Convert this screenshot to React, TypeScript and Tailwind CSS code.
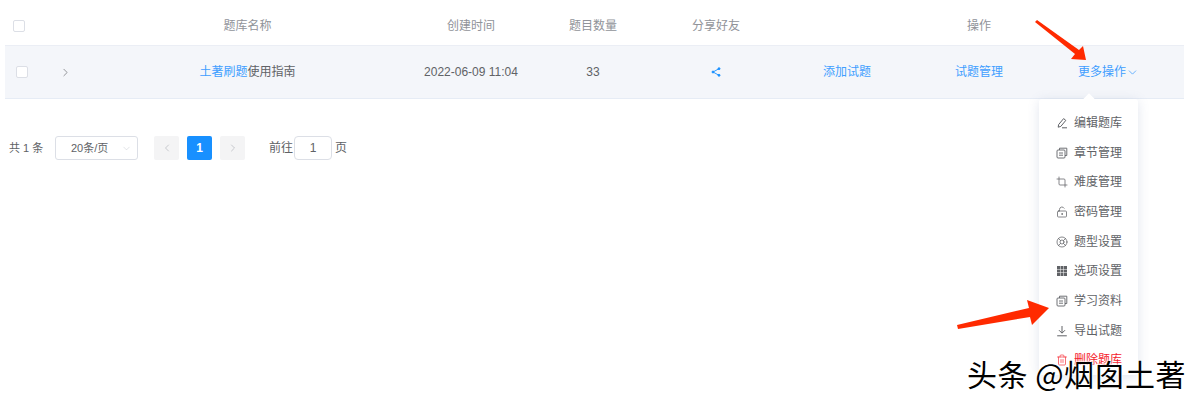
import React from 'react'
import { ChevronRight, ChevronLeft, ChevronDown, Crop, LockKeyholeOpen, LifeBuoy, Trash2 } from 'lucide-react'

const font = "font-['Liberation_Sans','Noto_Sans_CJK_SC',sans-serif]"
const columns = 'grid-cols-[40px_40px_325px_122px_122px_124px_138px_126px_142px]'

function PagesIcon() {
    return (
        <svg width="12" height="12" viewBox="0 0 12 12" fill="none" stroke="currentColor" strokeWidth="0.9">
            <rect x="1" y="3" width="8" height="8" rx="1" />
            <path d="M3.5 3V1.2H10.8V8.5H9" />
            <path d="M3 6H7M3 8.2H7" />
        </svg>
    )
}

function GridIcon() {
    return (
        <svg width="12" height="12" viewBox="0 0 12 12" fill="currentColor">
            {[1, 4.5, 8].map((y) =>
                [1, 4.5, 8].map((x) => <rect key={`${x}-${y}`} x={x} y={y} width="3" height="3" />)
            )}
        </svg>
    )
}

function EditIcon() {
    return (
        <svg width="12" height="12" viewBox="0 0 12 12" fill="none" stroke="currentColor" strokeWidth="1">
            <path d="M2.2 10.2 2.6 7.6 7.6 1.6 9.8 3.4 4.8 9.4Z" />
            <path d="M6 10.8H11" />
        </svg>
    )
}

function ExportIcon() {
    return (
        <svg width="12" height="12" viewBox="0 0 12 12" fill="none" stroke="currentColor" strokeWidth="1">
            <path d="M6 1V8M3 5.2 6 8.2 9 5.2" />
            <path d="M1.2 10.8H10.8" />
        </svg>
    )
}

function ShareIcon() {
    return (
        <svg width="10" height="10" viewBox="0 0 10 10" fill="currentColor" stroke="currentColor" strokeWidth="0.9">
            <path d="M8 1.7 2 5 8 8.3" fill="none" />
            <circle cx="8" cy="1.7" r="1" />
            <circle cx="2" cy="5" r="1" />
            <circle cx="8" cy="8.3" r="1" />
        </svg>
    )
}

const menuItems = [
    { label: '编辑题库', icon: <EditIcon /> },
    { label: '章节管理', icon: <PagesIcon /> },
    { label: '难度管理', icon: <Crop size={12} strokeWidth={1.5} /> },
    { label: '密码管理', icon: <LockKeyholeOpen size={12} strokeWidth={1.5} /> },
    { label: '题型设置', icon: <LifeBuoy size={12} strokeWidth={1.5} /> },
    { label: '选项设置', icon: <GridIcon /> },
    { label: '学习资料', icon: <PagesIcon /> },
    { label: '导出试题', icon: <ExportIcon /> },
]

function Checkbox() {
    return <span className='block w-[12px] h-[12px] bg-white border border-[#dcdfe6] rounded-[2px]'></span>
}

export default function App() {
    return (
        <div className={`relative w-[1200px] h-[401px] overflow-hidden bg-white text-[12px] ${font}`}>
            <div className='ml-[5px] w-[1179px]'>
                {/* header */}
                <div className={`h-[46px] pt-[7px] grid ${columns} items-center text-center text-[#909399] border-b border-[#ebeef5]`}>
                    <div className='pl-[8px]'><Checkbox /></div>
                    <div></div>
                    <div>题库名称</div>
                    <div>创建时间</div>
                    <div>题目数量</div>
                    <div>分享好友</div>
                    <div></div>
                    <div>操作</div>
                    <div></div>
                </div>
                {/* row */}
                <div className={`h-[53px] grid ${columns} items-center text-center text-[#606266] bg-[#f4f6fa] border-b border-[#e6ecf5]`}>
                    <div className='pl-[11px]'><Checkbox /></div>
                    <div className='flex justify-center text-[#606266]'><ChevronRight size={13} strokeWidth={1.2} /></div>
                    <div><span className='text-[#409eff]'>土著刷题</span>使用指南</div>
                    <div className='whitespace-nowrap'>2022-06-09 11:04</div>
                    <div>33</div>
                    <div className='flex justify-center text-[#1890ff]'><ShareIcon /></div>
                    <div className='text-[#409eff]'>添加试题</div>
                    <div className='text-[#409eff]'>试题管理</div>
                    <div className='pr-[9px] flex justify-center items-center text-[#409eff]'>
                        更多操作<ChevronDown size={13} strokeWidth={1.4} />
                    </div>
                </div>
            </div>

            {/* pagination */}
            <div className='mt-[37px] ml-[9px] flex items-center text-[#606266]'>
                <span className='w-[46px] whitespace-nowrap text-[11px]'>共 1 条</span>
                <div className='w-[83px] h-[24px] flex items-center justify-between pl-[15px] pr-[5px] border border-[#dcdfe6] rounded-[3px] text-[11px]'>
                    <span>20条/页</span>
                    <ChevronDown size={11} strokeWidth={1} className='text-[#c0c4cc]' />
                </div>
                <div className='ml-[16px] w-[25px] h-[24px] flex items-center justify-center bg-[#f4f4f5] text-[#a8abb2] rounded-[2px]'>
                    <ChevronLeft size={12} strokeWidth={1.2} />
                </div>
                <div className='ml-[8px] w-[25px] h-[24px] flex items-center justify-center bg-[#1890ff] text-white font-bold rounded-[2px]'>1</div>
                <div className='ml-[8px] w-[25px] h-[24px] flex items-center justify-center bg-[#f4f4f5] text-[#a8abb2] rounded-[2px]'>
                    <ChevronRight size={12} strokeWidth={1.2} />
                </div>
                <span className='ml-[24px]'>前往</span>
                <div className='ml-[1px] w-[38px] h-[24px] flex items-center justify-center border border-[#dcdfe6] rounded-[4px]'>1</div>
                <span className='ml-[3px]'>页</span>
            </div>

            {/* dropdown */}
            <div className='absolute left-[1039px] top-[99px] w-[99px] bg-white rounded-[3px] shadow-[0_2px_12px_rgba(90,110,160,0.18)] pt-[9px] text-[#606266]'>
                <div className='absolute left-[46px] top-[-4px] w-[8px] h-[8px] rotate-45 bg-white'></div>
                {menuItems.map((item) => (
                    <div key={item.label} className='h-[29.7px] flex items-center gap-[6px] pl-[17px] whitespace-nowrap'>
                        <span className='text-[#606266]'>{item.icon}</span>
                        <span>{item.label}</span>
                    </div>
                ))}
                <div className='h-[29.7px] flex items-center gap-[6px] pl-[17px] whitespace-nowrap text-[#f5222d]'>
                    <Trash2 size={12} strokeWidth={1.3} />
                    <span>删除题库</span>
                </div>
            </div>

            {/* annotation arrows */}
            <svg className='absolute left-0 top-0 pointer-events-none' width="1200" height="401" fill="#ff2a00">
                <polygon points="1035,22 1037,20 1079,50 1083,46 1086,60 1071,59 1075,54" />
                <polygon points="957,325 1029,308 1027,300 1049,308 1032,325 1030,317 958,329" />
            </svg>

            {/* watermark */}
            <div className="absolute left-[967px] top-[352px] whitespace-nowrap text-[30px] leading-[42px] tracking-[0.5px] text-black font-['Noto_Sans_CJK_SC',sans-serif] [text-shadow:0_0_2px_white,0_0_2px_white,0_0_3px_white]">头条 @烟囱土著</div>
        </div>
    )
}
